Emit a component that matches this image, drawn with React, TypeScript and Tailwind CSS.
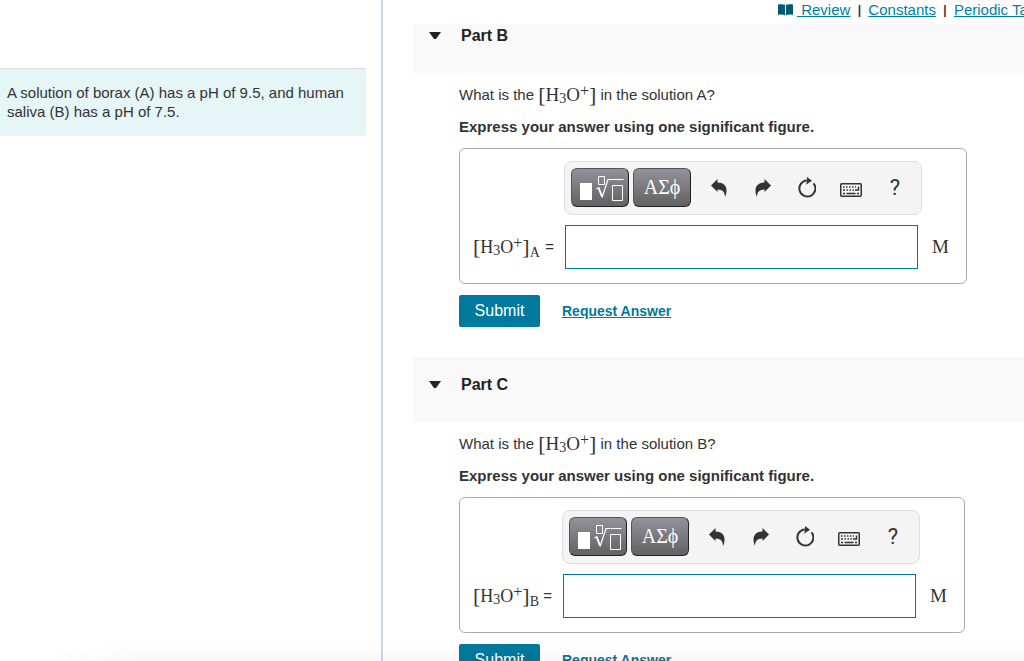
import React from 'react';

interface PartProps {
  title: string;
  solution: string;
  labelWidth: string;
  headerClass: string;
}

const BookIcon = () => (
  <svg width="15" height="12" viewBox="0 0 15 12" className="shrink-0 fill-[#005a70]" aria-hidden="true">
    <path d="M0 .5C2.500 0 5 0 7 .8v10.400c-2-.8-4.500-.8-7-.2zM8 .8c2-.8 4.500-.8 7-.3V11c-2.500-.6-5-.6-7 .2z" />
  </svg>
);

const TemplateIcon = () => (
  <svg width="44" height="26" viewBox="0 0 44 26" fill="none" stroke="#fff" aria-hidden="true">
    <path d="M0 8h12v17H0z" fill="#fff" stroke="none" />
    <path d="M18.500 1.500h6v8h-6z" />
    <path d="M32.500 10.500h10v15h-10z" />
    <path d="M16 14l3-1.500" />
    <path d="M18.500 12.500l3.500 9" strokeWidth="2" />
    <path d="M22 22.500l6-18h15.500" strokeWidth="1.200" />
  </svg>
);

const UndoIcon = ({ flip = false }: { flip?: boolean }) => (
  <svg width="16" height="18" viewBox="0 0 16 18" className={`fill-[#333] ${flip ? '-scale-x-100' : ''}`} aria-hidden="true">
    <path d="M0 6.500L6.500 0v3.500C12.500 3.500 15.500 7 15.500 11.500c0 2.500-.5 4.500-1.500 6.500 0-4.500-2-7.500-7.500-7.500V13z" />
  </svg>
);

const ResetIcon = () => (
  <svg width="18" height="21" viewBox="0 0 18 21" aria-hidden="true">
    <path d="M8 3.500A8 8 0 1 0 14.700 6.300" fill="none" stroke="#333" strokeWidth="2" transform="translate(.8 0)" />
    <path d="M9 0l5 3.800-6 4 1-3.300z" fill="#333" />
  </svg>
);

const KeyboardIcon = () => (
  <svg width="22" height="14" viewBox="0 0 22 14" fill="none" stroke="#333" aria-hidden="true">
    <rect x=".75" y=".75" width="20.500" height="12.500" rx="1" strokeWidth="1.500" />
    <path d="M3 4h1.500M6 4h1.500M9 4h1.500M12 4h1.500M15 4h1M3 7h2M6.500 7H8M9.500 7H11M12.500 7H14M15 7h3.500V3.500M3 10.500h2M6.500 10.500h9M17 10.500h2" strokeWidth="1.400" />
  </svg>
);

const Hydronium = ({ sub }: { sub?: string }) => (
  <span className={`inline-flex items-center font-['Liberation_Serif',serif] leading-5 whitespace-nowrap ${sub ? 'text-lg' : 'text-[19px]'}`}>
    <span className="text-[22px]">[</span>
    <span>H</span>
    <span className="self-end text-sm leading-3">3</span>
    <span>O</span>
    <span className="self-start text-base leading-3">+</span>
    <span className="text-[22px]">]</span>
    {sub && <span className="self-end text-sm leading-2">{sub}</span>}
  </span>
);

const ToolButton = ({ label, children }: { label: string; children: React.ReactNode }) => (
  <button type="button" aria-label={label} className="w-11 h-[39px] flex items-center justify-center">
    {children}
  </button>
);

const darkButton =
  'w-[58px] h-[39px] rounded-md border border-[#555] border-b-[#222] border-r-[#222] bg-linear-to-b from-[#93929b] to-[#626262] text-white flex items-center justify-center';

const Toolbar = () => (
  <div className="h-[54px] rounded-lg border border-[#ddd] bg-[#f4f4f4] pl-1.5 pr-1 pt-1.5 flex items-start">
    <button type="button" aria-label="Templates" className={`${darkButton} pl-1`}>
      <TemplateIcon />
    </button>
    <button type="button" aria-label="Symbols" className={`${darkButton} ml-1 mr-1.5 pb-0.5 font-['Liberation_Serif',serif] text-xl`}>
      ΑΣϕ
    </button>
    <ToolButton label="Undo"><UndoIcon /></ToolButton>
    <ToolButton label="Redo"><UndoIcon flip /></ToolButton>
    <ToolButton label="Reset"><ResetIcon /></ToolButton>
    <ToolButton label="Keyboard shortcuts"><span className="pt-1"><KeyboardIcon /></span></ToolButton>
    <ToolButton label="Help"><span className="font-[Roboto,sans-serif] text-[22px]">?</span></ToolButton>
  </div>
);

const Part = ({ title, solution, labelWidth, headerClass }: PartProps) => {
  const inputId = `answer-${solution}`;
  return (
    <section>
      <h2 className={`bg-[#f9f9f9] pl-4 text-base leading-6 font-bold text-[#222] ${headerClass}`}>
        <button type="button" className="flex items-center">
          <svg width="12" height="8" viewBox="0 0 12 8" className="mr-5 fill-[#222]" aria-hidden="true">
            <path d="M0 0h12L7 7H5z" />
          </svg>
          {title}
        </button>
      </h2>
      <div className="pl-[46px] pt-3">
        <p className="flex items-center h-5 whitespace-pre">
          What is the <Hydronium /> in the solution {solution}?
        </p>
        <p className="mt-3 leading-5 font-bold">Express your answer using one significant figure.</p>
        <div className="mt-[11px] w-fit rounded-md border border-[#aaa] pl-3 pr-[17px] pt-3 pb-3.5">
          <div className="flex">
            <div className={`shrink-0 ${labelWidth}`} />
            <Toolbar />
          </div>
          <div className="mt-2.5 flex items-center">
            <label htmlFor={inputId} className={`shrink-0 flex items-center justify-between pl-px pr-2.5 ${labelWidth}`}>
              <Hydronium sub={solution} />
              <span>=</span>
            </label>
            <input id={inputId} type="text" className="ml-px w-[353px] h-11 border border-[#007a9c] bg-white px-2 outline-none" />
            <span className="ml-3.5 font-['Liberation_Serif',serif] text-[19px]">M</span>
          </div>
        </div>
        <div className="mt-[11px] flex items-center">
          <button type="button" className="w-[81px] h-8 rounded-xs bg-[#007a9c] text-white text-base font-medium">
            Submit
          </button>
          <a href="#" className="ml-[22px] text-sm font-bold text-[#007a9c] underline">Request Answer</a>
        </div>
      </div>
    </section>
  );
};

const Divider = () => <span className="w-[18px] shrink-0 text-center text-xs font-bold text-[#333]">|</span>;

export default function App() {
  return (
    <div className="relative h-screen flex overflow-hidden bg-white font-['Liberation_Sans',Arial,sans-serif] text-[15px] text-[#333]">
      <aside className="w-[383px] shrink-0 border-r-2 border-[#c9d8e6] pt-[68px] pr-[15px]">
        <p className="border-t border-[#d8dcdc] bg-[#e6f5f6] px-[7px] pt-3.5 pb-[15px] leading-[19px]">
          A solution of borax (A) has a pH of 9.5, and human saliva (B) has a pH of 7.5.
        </p>
      </aside>
      <main className="flex-1 min-w-0 pl-[30px] overflow-hidden">
        <nav className="h-6 pb-1 pl-[365px] flex items-center whitespace-pre text-[#007fa3]">
          <BookIcon />
          <a href="#" className="ml-1 shrink-0 underline"> Review</a>
          <Divider />
          <a href="#" className="shrink-0 underline">Constants</a>
          <Divider />
          <a href="#" className="shrink-0 underline">Periodic Table</a>
        </nav>
        <Part title="Part B" solution="A" labelWidth="w-[92px]" headerClass="pb-[25px]" />
        <div className="h-[30px]" />
        <Part title="Part C" solution="B" labelWidth="w-[90px]" headerClass="pt-4 pb-[25px]" />
      </main>
      {/* Soft shadow along the bottom edge */}
      <div className="pointer-events-none absolute bottom-0 left-12 right-0 h-4 bg-linear-to-t from-black/3 to-transparent mask-l-from-90%" />
    </div>
  );
}
